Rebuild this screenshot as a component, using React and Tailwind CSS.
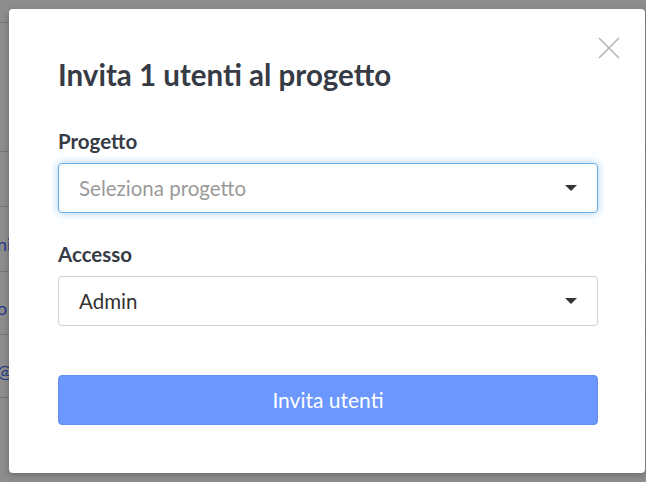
const rows = [
  { h: 'h-[23px]', text: '' },
  { h: 'h-[129px]', text: '' },
  { h: 'h-[55px]', text: '' },
  { h: 'h-[65px]', text: 'ni' },
  { h: 'h-[63px]', text: 'o' },
  { h: 'h-[63px]', text: '@g' },
]

function Caret() {
  return (
    <svg width="12" height="6" viewBox="0 0 12 6" className="shrink-0">
      <path d="M0 0h12L6 6z" fill="#333" />
    </svg>
  )
}

function Select({ value, placeholder, focused }) {
  return (
    <div
      className={`flex items-center justify-between h-[50px] rounded-[4px] border pl-[20px] pr-[20px] bg-white ${
        focused
          ? 'border-[#66afe9] shadow-[0_0_8px_rgba(102,175,233,0.6)]'
          : 'border-[#cfcfcf]'
      }`}
    >
      <span className={`text-[20.5px] ${value ? 'text-[#333]' : 'text-[#9a9a9a]'}`}>
        {value || placeholder}
      </span>
      <Caret />
    </div>
  )
}

export default function App() {
  return (
    <div className="relative w-[646px] h-[482px] overflow-hidden bg-[#8d8d8d] font-['Lato',sans-serif]">
      {/* page behind the overlay */}
      <div className="flex flex-col">
        {rows.map((r, i) => (
          <div key={i} className={`${r.h} border-b border-[#747474] flex items-center pt-[10px]`}>
            {r.text && (
              <span className="text-[18px] leading-[20px] text-[#253b86] -ml-[3px]">{r.text}</span>
            )}
          </div>
        ))}
      </div>

      {/* modal */}
      <div className="absolute left-[9px] top-[9px] w-[636px] h-[464px] bg-white rounded-[4px] shadow-[0_2px_6px_rgba(0,0,0,0.25)] px-[49px] pt-[46px]">
        <button className="absolute left-[589px] top-[28px]">
          <svg width="22" height="22" viewBox="0 0 22 22">
            <path d="M1 1l20 20M21 1L1 21" stroke="#b5b5b5" strokeWidth="1.6" />
          </svg>
        </button>
        <h2 className="text-[29.5px] leading-[40px] font-bold text-[#363b45] w-[540px]">
          Invita 1 utenti al progetto
        </h2>

        <div className="w-[540px] mt-[34px]">
          <label className="block text-[20.5px] leading-[24px] font-bold text-[#363b45] mb-[10px]">
            Progetto
          </label>
          <Select placeholder="Seleziona progetto" focused />

          <label className="block text-[20.5px] leading-[24px] font-bold text-[#363b45] mt-[29px] mb-[10px]">
            Accesso
          </label>
          <Select value="Admin" />

          <button className="mt-[49px] w-full h-[50px] rounded-[4px] bg-[#6b97ff] border border-[#6691f2] text-white text-[21px]">
            Invita utenti
          </button>
        </div>
      </div>
    </div>
  )
}
